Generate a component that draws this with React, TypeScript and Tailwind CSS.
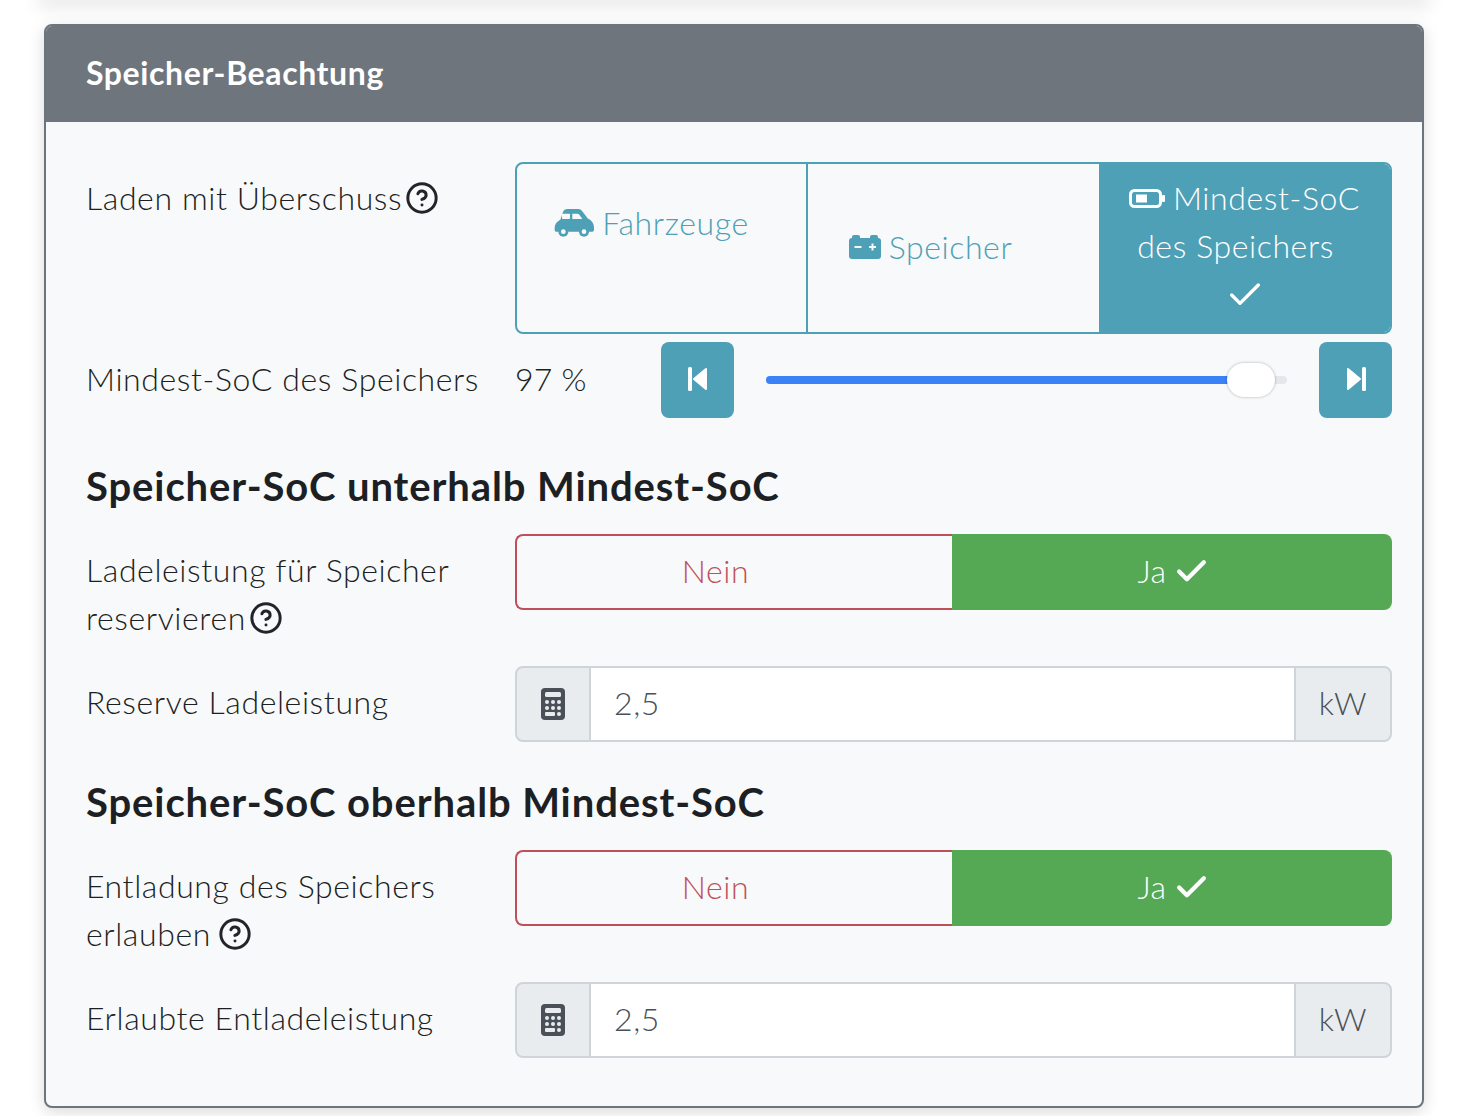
import { ReactNode } from 'react';
import { Check } from 'lucide-react';

function Help({ className = 'ml-[-4px]' }: { className?: string }) {
  return (
    <svg viewBox="0 0 24 24" fill="none" stroke="#212529" strokeWidth="2.1" strokeLinecap="round" className={`mb-[-5px] inline-block h-[34px] w-[34px] align-baseline ${className}`}>
      <circle cx="12" cy="12" r="10" />
      <path d="M9.09 9a3 3 0 0 1 5.83 1c0 2-3 3-3 3" />
      <path d="M12 17h.01" />
    </svg>
  );
}

function CarIcon() {
  return (
    <svg viewBox="0 0 120 84" className="h-[28px] w-[40px] fill-current">
      <path d="M2 58C2 42 12 36 19 32L27 9C29 3 34 0 40 0H72C78 0 82 2 86 8L102 29C112 33 120 42 120 56V62C120 66 117 68 113 68H8C4 68 2 66 2 62Z" />
      <rect x="24" y="14" width="24" height="16" rx="2" fill="#f8f9fa" />
      <path d="M55 14H71C73 14 74 15 76 17L85 30H55Z" fill="#f8f9fa" />
      <circle cx="28" cy="68" r="15" />
      <circle cx="90" cy="68" r="15" />
      <circle cx="28" cy="68" r="7" fill="#f8f9fa" />
      <circle cx="90" cy="68" r="7" fill="#f8f9fa" />
    </svg>
  );
}

function BatteryIcon() {
  return (
    <svg viewBox="0 0 32 24" className="h-[24px] w-[32px] fill-current">
      <rect x="0" y="3" width="32" height="21" rx="3" />
      <rect x="3" y="0" width="8" height="6" rx="2" />
      <rect x="21" y="0" width="8" height="6" rx="2" />
      <rect x="5.5" y="11" width="7" height="2" fill="#f8f9fa" />
      <rect x="20" y="11" width="7" height="2" fill="#f8f9fa" />
      <rect x="22.5" y="8.5" width="2" height="7" fill="#f8f9fa" />
    </svg>
  );
}

function BatteryQuarterIcon() {
  return (
    <svg viewBox="0 0 36 19" className="h-[19px] w-[36px]">
      <rect x="1.5" y="1.5" width="30" height="16" rx="4" fill="none" stroke="currentColor" strokeWidth="3" />
      <rect x="33" y="6" width="3" height="7" rx="1" fill="currentColor" />
      <rect x="7" y="5.5" width="11" height="8" fill="currentColor" />
    </svg>
  );
}

function StepIcon({ flip }: { flip?: boolean }) {
  return (
    <svg viewBox="0 0 20 24" className={`h-[24px] w-[20px] fill-white ${flip ? '-scale-x-100' : ''}`}>
      <rect x="0" y="0" width="4" height="24" rx="1.5" />
      <path d="M6 12L18 2V22Z" stroke="white" strokeWidth="2" strokeLinejoin="round" />
    </svg>
  );
}

function CalcIcon() {
  return (
    <svg viewBox="0 0 24 32" className="h-[32px] w-[24px] fill-[#495057]">
      <rect x="0" y="0" width="24" height="32" rx="4" />
      <g fill="#e9ecef">
        <rect x="4" y="4" width="16" height="5" rx="1.5" />
        <circle cx="6" cy="14" r="2" />
        <circle cx="12" cy="14" r="2" />
        <circle cx="18" cy="14" r="2" />
        <circle cx="6" cy="20" r="2" />
        <circle cx="12" cy="20" r="2" />
        <circle cx="18" cy="20" r="2" />
        <rect x="4" y="24" width="10" height="4" rx="1" />
        <circle cx="18" cy="26" r="2" />
      </g>
    </svg>
  );
}

function Row({ label, className, children }: { label: ReactNode; className?: string; children: ReactNode }) {
  return (
    <div className={`flex ${className ?? ''}`}>
      <div className="w-[429px] shrink-0 pr-[30px] pt-[12px] leading-[48px]">{label}</div>
      <div className="flex-1">{children}</div>
    </div>
  );
}

function YesNo() {
  return (
    <div className="flex h-[76px]">
      <div className="flex w-[437px] items-center justify-center rounded-l-lg border-2 border-r-0 border-[#bf4f58] pb-[3px] pr-[38px] text-[#bf4f58]">Nein</div>
      <div className="flex flex-1 items-center justify-center gap-[6px] rounded-r-lg bg-[#55a854] pb-[2px] pl-[3px] text-white">
        Ja <Check size={37} strokeWidth={2.8} />
      </div>
    </div>
  );
}

function NumberInput() {
  return (
    <div className="flex h-[76px] text-[#495057]">
      <div className="flex w-[76px] items-center justify-center rounded-l-lg border-2 border-[#ced4da] bg-[#e9ecef]">
        <CalcIcon />
      </div>
      <div className="flex flex-1 items-center border-y-2 border-[#ced4da] bg-white pb-[3px] pl-[23px]">2,5</div>
      <div className="flex w-[98px] items-center justify-center rounded-r-lg border-2 border-[#ced4da] bg-[#e9ecef] pb-[3px]">kW</div>
    </div>
  );
}

export default function App() {
  return (
    <div className="h-[1116px] overflow-hidden bg-white pl-[44px] pr-[45px] text-[32px] font-light tracking-[0.6px] font-['Lato',sans-serif] text-[#1c1f23]">
      <div className="h-0 shadow-[0_0_18px_6px_rgba(0,0,0,0.12)]" />
      <div className="mt-[24px] h-[1084px] overflow-hidden rounded-lg border-2 border-[#6c757d] bg-[#f8f9fa] shadow-[0_4px_16px_rgba(0,0,0,0.15)]">
        <div className="-mx-[2px] -mt-[2px] flex h-[98px] items-center bg-[#6e757d] pl-[42px] font-bold tracking-[0.6px] text-white">Speicher-Beachtung</div>

        <div className="pl-[40px] pr-[30px] pt-[40px]">
          <div className="flex">
            <div className="w-[429px] shrink-0 pt-[12px] leading-[48px]">
              Laden mit Überschuss <Help className="ml-[-7px]" />
            </div>
            <div className="flex h-[172px] flex-1 overflow-hidden rounded-lg border-2 border-[#4ea0b7] leading-[48px] text-[#4ea0b7]">
              <div className="flex w-[291px] items-start justify-center border-r-2 border-[#4ea0b7] pr-[20px] pt-[35px]">
                <span className="flex items-center gap-2"><CarIcon /> Fahrzeuge</span>
              </div>
              <div className="flex w-[291px] items-center justify-center pb-[2px] pr-[46px]">
                <span className="flex items-center gap-2"><BatteryIcon /> Speicher</span>
              </div>
              <div className="flex flex-1 flex-col items-center justify-center bg-[#4ea0b7] pb-[4px] text-white">
                <span className="flex items-center gap-2"><BatteryQuarterIcon /> Mindest-SoC</span>
                <span className="pr-[18px]">des Speichers</span>
                <span className="mt-[2px] flex h-[46px] items-center"><Check size={40} strokeWidth={2} /></span>
              </div>
            </div>
          </div>

          <div className="mt-2 flex h-[76px] items-center">
            <div className="w-[429px] shrink-0 pb-[3px]">Mindest-SoC des Speichers</div>
            <div className="w-[146px] shrink-0 pb-[3px] tracking-[0.2px]">97 %</div>
            <div className="flex h-[76px] w-[73px] items-center justify-center rounded-lg bg-[#4ea0b7] pb-[2px]">
              <StepIcon />
            </div>
            <div className="relative mx-[32px] h-2 flex-1 rounded-full bg-[#e5e7eb]">
              <div className="h-2 w-[470px] rounded-full bg-[#3b82f6]" />
              <div className="absolute left-[461px] top-[-13px] h-[34px] w-[48px] rounded-[17px] bg-white shadow-[0_0_3px_rgba(0,0,0,0.3)]" />
            </div>
            <div className="flex h-[76px] w-[73px] items-center justify-center rounded-lg bg-[#4ea0b7] pb-[2px]">
              <StepIcon flip />
            </div>
          </div>

          <h3 className="mt-[44px] text-[40px] font-bold leading-[48px] tracking-[0.9px]">Speicher-SoC unterhalb Mindest-SoC</h3>
          <Row className="mt-[24px]" label={<>Ladeleistung für Speicher reservieren <Help className="ml-[-6px]" /></>}>
            <YesNo />
          </Row>
          <Row className="mt-[24px]" label="Reserve Ladeleistung">
            <NumberInput />
          </Row>

          <h3 className="mt-[36px] text-[40px] font-bold leading-[48px] tracking-[0.9px]">Speicher-SoC oberhalb Mindest-SoC</h3>
          <Row className="mt-[24px]" label={<>Entladung des Speichers erlauben <Help className="ml-[-2px]" /></>}>
            <YesNo />
          </Row>
          <Row className="mt-[24px]" label="Erlaubte Entladeleistung">
            <NumberInput />
          </Row>
        </div>
      </div>
    </div>
  );
}
